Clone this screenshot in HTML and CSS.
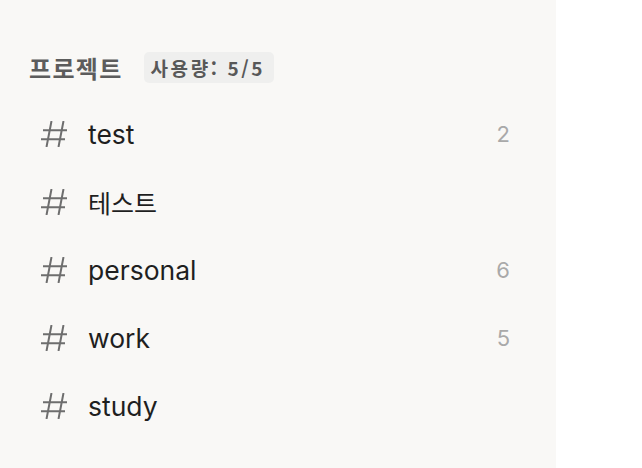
FILE: index.html
```html
<!DOCTYPE html>
<html lang="ko">
<head>
<meta charset="utf-8">
<link rel="stylesheet" href="styles.css">
</head>
<body>
<aside class="sidebar">
  <div class="section-head">
    <span class="section-title">프로젝트</span>
    <span class="usage">사용량: 5/5</span>
  </div>
  <ul class="projects">
    <li class="project">
      <svg class="hash" viewBox="0 0 26 26"><path d="M10.5 0L5.5 26M22.5 0L17.5 26M2 9.2H26M0 18.2H24" /></svg>
      <span class="label">test</span>
      <span class="count">2</span>
    </li>
    <li class="project">
      <svg class="hash" viewBox="0 0 26 26"><path d="M10.5 0L5.5 26M22.5 0L17.5 26M2 9.2H26M0 18.2H24" /></svg>
      <span class="label ko">테스트</span>
      <span class="count"></span>
    </li>
    <li class="project">
      <svg class="hash" viewBox="0 0 26 26"><path d="M10.5 0L5.5 26M22.5 0L17.5 26M2 9.2H26M0 18.2H24" /></svg>
      <span class="label">personal</span>
      <span class="count">6</span>
    </li>
    <li class="project">
      <svg class="hash" viewBox="0 0 26 26"><path d="M10.5 0L5.5 26M22.5 0L17.5 26M2 9.2H26M0 18.2H24" /></svg>
      <span class="label">work</span>
      <span class="count">5</span>
    </li>
    <li class="project">
      <svg class="hash" viewBox="0 0 26 26"><path d="M10.5 0L5.5 26M22.5 0L17.5 26M2 9.2H26M0 18.2H24" /></svg>
      <span class="label">study</span>
      <span class="count"></span>
    </li>
  </ul>
</aside>
</body>
</html>
```

FILE: styles.css
```css
html, body {
  margin: 0;
  padding: 0;
  background: #ffffff;
  height: 100%;
}

body {
  font-family: Inter, "Noto Sans CJK KR", sans-serif;
  overflow: hidden;
}

.sidebar {
  width: 556px;
  height: 468px;
  box-sizing: border-box;
  background: #f9f8f6;
  padding: 52px 46px 0 28px;
}

.section-head {
  display: flex;
  align-items: center;
  gap: 21px;
  height: 31px;
  margin-bottom: 17px;
  padding-left: 1px;
}

.section-title {
  font-family: "Noto Sans CJK KR", sans-serif;
  font-weight: 700;
  font-size: 24px;
  letter-spacing: 1.3px;
  color: #5c5c5c;
  line-height: 1;
}

.usage {
  display: inline-flex;
  align-items: center;
  height: 31px;
  padding: 0 9px 0 7px;
  background: #efefee;
  border-radius: 5px;
  font-family: "Noto Sans CJK KR", sans-serif;
  font-weight: 700;
  font-size: 19px;
  letter-spacing: 2.6px;
  color: #585858;
}

.projects {
  list-style: none;
  margin: 0;
  padding: 0;
}

.project {
  display: flex;
  align-items: center;
  height: 68px;
  padding-left: 13px;
}

.hash {
  width: 26px;
  height: 26px;
  flex: none;
  fill: none;
  stroke: #6e6e6e;
  stroke-width: 2;
}

.label {
  flex: 1;
  margin-left: 21px;
  font-size: 26.5px;
  color: #1f1f1f;
  line-height: 1;
}

.label.ko {
  font-family: "Noto Sans CJK KR", sans-serif;
  font-size: 25px;
}

.count {
  font-size: 22px;
  color: #a9a9a9;
  line-height: 1;
}
```
